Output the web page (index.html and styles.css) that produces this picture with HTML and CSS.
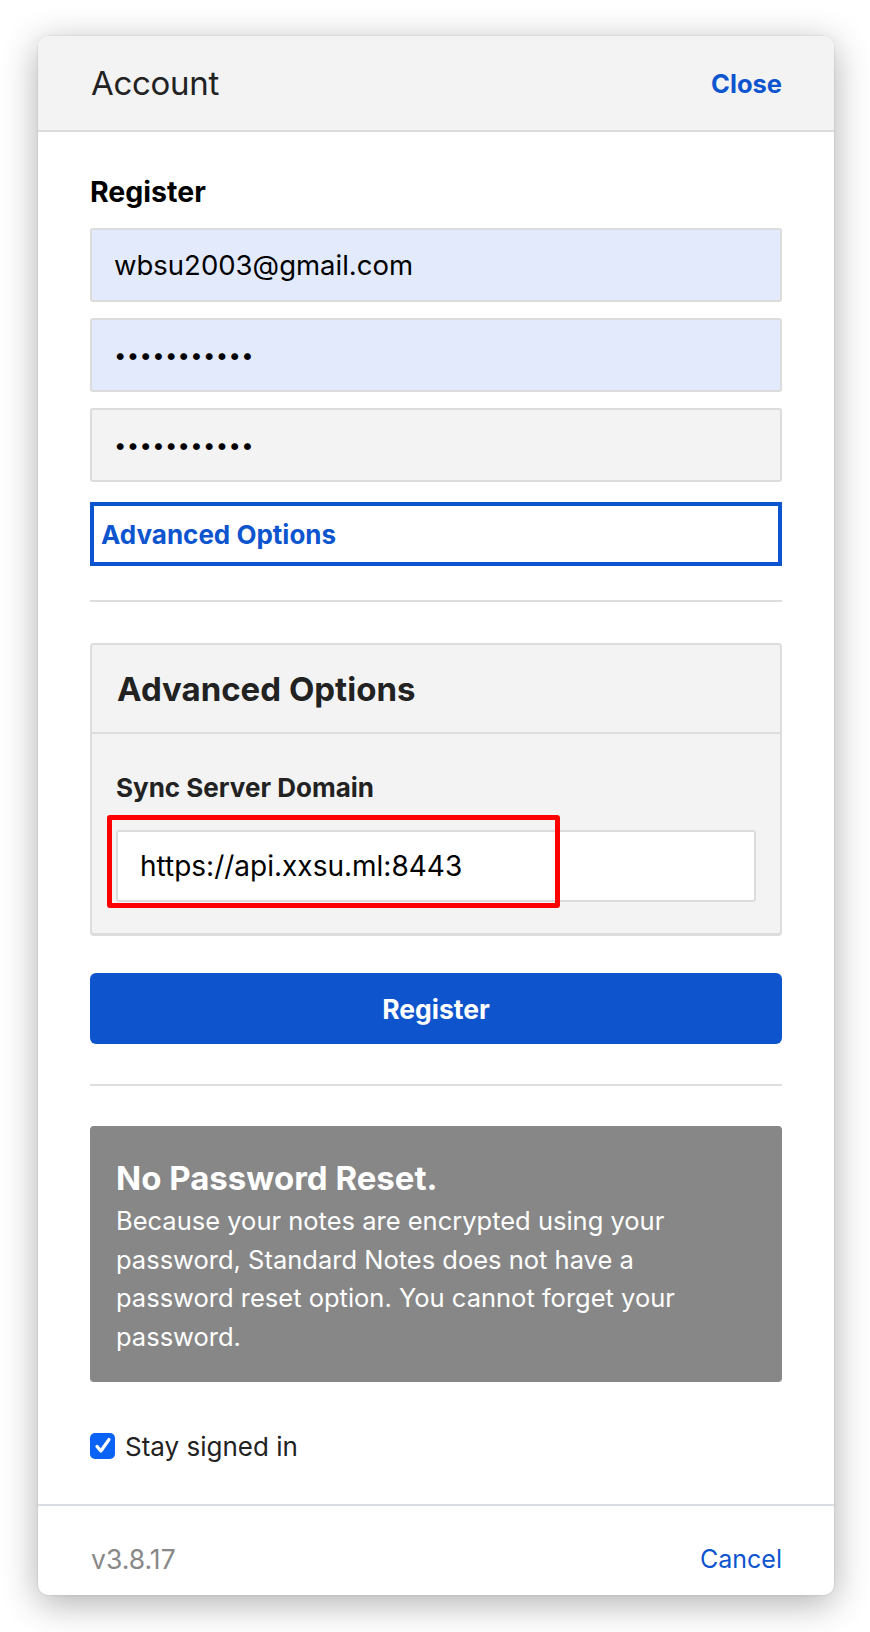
FILE: index.html
```html
<!DOCTYPE html>
<html lang="en">
<head>
<meta charset="utf-8">
<title>Account</title>
<link rel="stylesheet" href="styles.css">
</head>
<body>
<div class="panel">
  <header class="panel-header">
    <h1 class="panel-title">Account</h1>
    <a class="link-strong" href="#">Close</a>
  </header>

  <div class="panel-body">
    <div class="section-label">Register</div>
    <form class="form">
      <input class="field field-autofill" type="email" value="wbsu2003@gmail.com">
      <input class="field field-autofill" type="password" value="12345678901">
      <input class="field" type="password" value="12345678901">
      <button type="button" class="adv-toggle">Advanced Options</button>
    </form>

    <hr class="separator">

    <section class="adv">
      <div class="adv-head">Advanced Options</div>
      <div class="adv-body">
        <div class="adv-label">Sync Server Domain</div>
        <div class="url-wrap">
          <input class="field field-url" type="text" value="https://api.xxsu.ml:8443">
          <span class="highlight"></span>
        </div>
      </div>
    </section>

    <button type="button" class="btn-primary">Register</button>

    <hr class="separator">

    <div class="notice">
      <div class="notice-title">No Password Reset.</div>
      <p class="notice-text">Because your notes are encrypted using your password, Standard Notes does not have a password reset option. You cannot forget your password.</p>
    </div>

    <label class="check-row">
      <span class="checkbox">
        <svg viewBox="0 0 24 24" width="22" height="22"><path d="M5.5 12.5l4.2 5L18.5 5" fill="none" stroke="#fff" stroke-width="3.6" stroke-linecap="round" stroke-linejoin="round"/></svg>
      </span>
      <span class="check-text">Stay signed in</span>
    </label>
  </div>

  <footer class="panel-footer">
    <span class="version">v3.8.17</span>
    <a class="link" href="#">Cancel</a>
  </footer>
</div>
</body>
</html>
```

FILE: styles.css
```css
* { box-sizing: border-box; }

html, body {
  margin: 0;
  padding: 0;
  background: #ffffff;
}

body {
  font-family: Inter, "Noto Sans", "Liberation Sans", sans-serif;
  color: #222;
  width: 870px;
  height: 1632px;
  overflow: hidden;
}

.panel {
  margin: 36px 0 0 38px;
  width: 796px;
  background: #fff;
  border-radius: 10px;
  box-shadow: 0 8px 36px rgba(0, 0, 0, 0.32), 0 0 2px rgba(0, 0, 0, 0.15);
  overflow: hidden;
}

.panel-header {
  height: 96px;
  background: #f3f3f3;
  border-bottom: 2px solid #dddddd;
  display: flex;
  align-items: center;
  justify-content: space-between;
  padding: 0 52px 0 53px;
}

.panel-title {
  margin: 0;
  font-size: 33px;
  font-weight: 400;
  color: #222;
  letter-spacing: -0.3px;
}

.link-strong {
  font-size: 25.5px;
  font-weight: 700;
  color: #0d55cf;
  text-decoration: none;
}

.panel-body {
  padding: 42px 52px 41px 52px;
}

.section-label {
  font-size: 28.5px;
  font-weight: 700;
  line-height: 36px;
  color: #000;
  margin-bottom: 18px;
}

.form {
  display: flex;
  flex-direction: column;
  gap: 16px;
  margin: 0;
}

.field {
  display: block;
  width: 100%;
  height: 74px;
  border: 2px solid #dcdcdc;
  border-radius: 3px;
  background: #f3f3f3;
  padding: 0 22px;
  font-family: inherit;
  font-size: 27.5px;
  color: #000;
  outline: none;
}

.field-autofill {
  background: #e2eafc;
}

.field[type="password"] {
  font-size: 22px;
  letter-spacing: 0.35px;
}

.adv-toggle {
  margin-top: 4px;
  height: 64px;
  width: 100%;
  border: 4px solid #0d55cf;
  background: #fff;
  text-align: left;
  padding: 0 7px;
  font-family: inherit;
  font-size: 26px;
  font-weight: 700;
  color: #0d55cf;
}

.separator {
  border: 0;
  height: 2px;
  background: #dddddd;
  margin: 34px 0 41px;
}

.adv {
  background: #f3f3f3;
  border: 2px solid #dddddd;
  border-bottom-width: 3px;
  border-radius: 4px;
}

.adv-head {
  height: 89px;
  border-bottom: 2px solid #dddddd;
  display: flex;
  align-items: center;
  padding: 0 25px;
  font-size: 33px;
  font-weight: 700;
  color: #222;
}

.adv-body {
  padding: 37px 24px 31px;
}

.adv-label {
  font-size: 26px;
  font-weight: 700;
  line-height: 34px;
  color: #222;
  margin-bottom: 25px;
}

.url-wrap {
  position: relative;
}

.field-url {
  height: 72px;
  background: #fff;
  font-size: 28px;
}

.highlight {
  position: absolute;
  left: -9px;
  top: -15px;
  width: 453px;
  height: 93px;
  border: 5px solid #ff0000;
  border-radius: 3px;
  pointer-events: none;
}

.btn-primary {
  display: block;
  width: 100%;
  margin-top: 37px;
  height: 71px;
  border: 0;
  border-radius: 6px;
  background: #0e55cd;
  color: #fff;
  font-family: inherit;
  font-size: 26.5px;
  font-weight: 700;
}

.btn-primary + .separator {
  margin-top: 40px;
  margin-bottom: 40px;
}

.notice {
  background: #878787;
  border-radius: 4px;
  padding: 32px 50px 26px 26px;
  color: #fff;
}

.notice-title {
  font-size: 33px;
  font-weight: 700;
  line-height: 40px;
  margin-bottom: 4px;
}

.notice-text {
  margin: 0;
  font-size: 25.5px;
  line-height: 38.5px;
}

.check-row {
  margin-top: 47px;
  display: flex;
  align-items: center;
  gap: 10px;
  height: 34px;
}

.checkbox {
  width: 25px;
  height: 26px;
  border-radius: 5px;
  background: #0b63f6;
  display: flex;
  align-items: center;
  justify-content: center;
}

.check-text {
  font-size: 26px;
  color: #222;
}

.panel-footer {
  border-top: 2px solid #d9dde2;
  display: flex;
  justify-content: space-between;
  align-items: center;
  padding: 36px 52px 19px 53px;
  line-height: 34px;
  font-size: 25px;
}

.version {
  color: #888;
  font-size: 26.5px;
}

.link {
  color: #0d55cf;
  text-decoration: none;
}
```
